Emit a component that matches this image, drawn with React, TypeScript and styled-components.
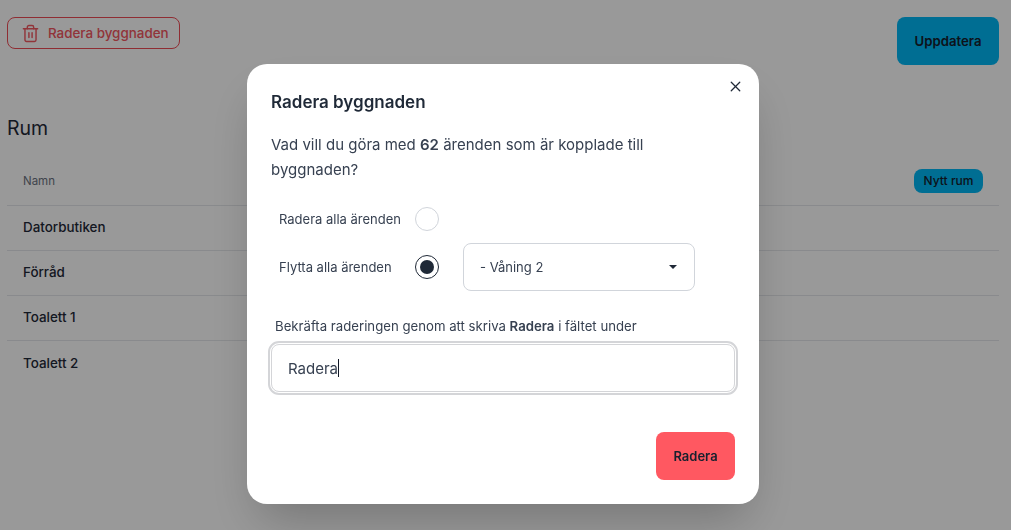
import React from 'react'
import styled, { createGlobalStyle } from 'styled-components'
import { Trash2, X } from 'lucide-react'

const rooms = ['Datorbutiken', 'Förråd', 'Toalett 1', 'Toalett 2']

const App = () => {
  return (
    <>
      <GlobalStyle />
      <Page>
        <TopBar>
          <DeleteButton>
            <Trash2 size={19} strokeWidth={1.8} />
            Radera byggnaden
          </DeleteButton>
          <UpdateButton>Uppdatera</UpdateButton>
        </TopBar>
        <SectionTitle>Rum</SectionTitle>
        <TableHead>
          <HeadLabel>Namn</HeadLabel>
          <NewRoomButton>Nytt rum</NewRoomButton>
        </TableHead>
        {rooms.map((room) => (
          <RoomRow key={room}>{room}</RoomRow>
        ))}
      </Page>
      <Overlay>
        <Modal>
          <CloseButton>
            <X size={17} strokeWidth={1.8} />
          </CloseButton>
          <ModalTitle>Radera byggnaden</ModalTitle>
          <Question>
            Vad vill du göra med <b>62</b> ärenden som är kopplade till
            byggnaden?
          </Question>
          <OptionRow>
            <OptionLabel>Radera alla ärenden</OptionLabel>
            <Radio />
          </OptionRow>
          <OptionRow>
            <OptionLabel>Flytta alla ärenden</OptionLabel>
            <Radio $checked />
            <Select>
              - Våning 2
              <Caret />
            </Select>
          </OptionRow>
          <ConfirmLabel>
            Bekräfta raderingen genom att skriva <b>Radera</b> i fältet under
          </ConfirmLabel>
          <InputFrame>
            Radera
            <TextCursor />
          </InputFrame>
          <ModalFooter>
            <ConfirmButton>Radera</ConfirmButton>
          </ModalFooter>
        </Modal>
      </Overlay>
    </>
  )
}

const GlobalStyle = createGlobalStyle`
  html, body {
    margin: 0;
    height: 100%;
    overflow: hidden;
    background: #fff;
    font-family: 'Inter', 'Noto Sans', sans-serif;
    color: #1f2937;
  }
  * {
    box-sizing: border-box;
  }
`

const Page = styled.div`
  width: 1011px;
  height: 530px;
  padding: 17px 12px 0 7px;
`

const TopBar = styled.div`
  display: flex;
  justify-content: space-between;
  align-items: flex-start;
`

const DeleteButton = styled.button`
  display: flex;
  align-items: center;
  gap: 8px;
  width: 173px;
  height: 32px;
  padding: 0 0 0 13px;
  border: 1px solid #ef4b55;
  border-radius: 8px;
  background: transparent;
  color: #f25760;
  font: 500 13.4px 'Inter', sans-serif;
`

const UpdateButton = styled.button`
  width: 102px;
  height: 48px;
  border: 0;
  border-radius: 8px;
  background: #00b8f5;
  color: #16202e;
  font: 600 13.2px 'Inter', sans-serif;
`

const SectionTitle = styled.h2`
  margin: 51px 0 16px;
  font-size: 19.5px;
  font-weight: 400;
  line-height: 24px;
`

const TableHead = styled.div`
  display: flex;
  justify-content: space-between;
  align-items: center;
  height: 50px;
  padding: 0 16px;
  border-bottom: 1px solid #e5e7eb;
`

const HeadLabel = styled.span`
  font-size: 11.5px;
  color: #6b7280;
`

const NewRoomButton = styled.button`
  height: 24px;
  width: 69px;
  padding: 0;
  border: 0;
  border-radius: 8px;
  background: #00b8f5;
  color: #16202e;
  font: 500 12px 'Inter', sans-serif;
`

const RoomRow = styled.div`
  display: flex;
  align-items: center;
  height: 45px;
  padding: 0 16px 2px;
  border-bottom: 1px solid #e5e7eb;
  font-size: 13.4px;
  font-weight: 500;

  &:last-child {
    border-bottom: 0;
  }
`

const Overlay = styled.div`
  position: fixed;
  inset: 0;
  display: flex;
  justify-content: flex-start;
  align-items: flex-start;
  padding: 64px 0 0 247px;
  background: rgba(0, 0, 0, 0.4);
`

const Modal = styled.div`
  position: relative;
  width: 512px;
  height: 440px;
  padding: 27px 24px 24px;
  border-radius: 20px;
  background: #fff;
  box-shadow: 0 25px 50px -12px rgba(0, 0, 0, 0.25);
`

const CloseButton = styled.button`
  position: absolute;
  top: 14px;
  right: 15px;
  display: flex;
  padding: 0;
  border: 0;
  background: none;
  color: #1f2937;
`

const ModalTitle = styled.h3`
  margin: 0;
  font-size: 17px;
  font-weight: 600;
  line-height: 22px;
`

const Question = styled.p`
  width: 400px;
  margin: 19px 0 13px;
  font-size: 15px;
  line-height: 25px;
  color: #374151;

  b {
    font-weight: 600;
  }
`

const OptionRow = styled.div`
  display: flex;
  align-items: center;
  height: 48px;
  padding-left: 8px;
`

const OptionLabel = styled.span`
  width: 136px;
  font-size: 13px;
  color: #374151;
`

const Radio = styled.span<{ $checked?: boolean }>`
  display: flex;
  align-items: center;
  justify-content: center;
  width: 24px;
  height: 24px;
  border-radius: 50%;
  border: 1px solid ${(p) => (p.$checked ? '#1f2937' : '#d1d5db')};

  &::after {
    content: '';
    display: ${(p) => (p.$checked ? 'block' : 'none')};
    width: 14px;
    height: 14px;
    border-radius: 50%;
    background: #1f2937;
  }
`

const Select = styled.div`
  display: flex;
  align-items: center;
  justify-content: space-between;
  width: 232px;
  height: 48px;
  margin-left: 24px;
  padding: 0 17px 0 16px;
  border: 1px solid #d1d5db;
  border-radius: 8px;
  font-size: 13px;
  color: #374151;
`

const Caret = styled.span`
  width: 0;
  height: 0;
  border-left: 4px solid transparent;
  border-right: 4px solid transparent;
  border-top: 4px solid #1f2937;
`

const ConfirmLabel = styled.p`
  margin: 26px 0 0 4px;
  font-size: 13.2px;
  line-height: 18px;
  color: #374151;

  b {
    font-weight: 600;
  }
`

const InputFrame = styled.div`
  display: flex;
  align-items: center;
  width: 464px;
  height: 48px;
  margin-top: 9px;
  padding-left: 16px;
  border: 1px solid #d4d5d8;
  border-radius: 8px;
  outline: 2px solid #d4d5d8;
  outline-offset: 1px;
  font-size: 15px;
  color: #374151;
`

const TextCursor = styled.span`
  width: 1px;
  height: 18px;
  background: #111827;
`

const ModalFooter = styled.div`
  display: flex;
  justify-content: flex-end;
  margin-top: 40px;
`

const ConfirmButton = styled.button`
  width: 79px;
  height: 48px;
  border: 0;
  border-radius: 8px;
  background: #ff5861;
  color: #16202e;
  font: 600 13px 'Inter', sans-serif;
`

export default App
